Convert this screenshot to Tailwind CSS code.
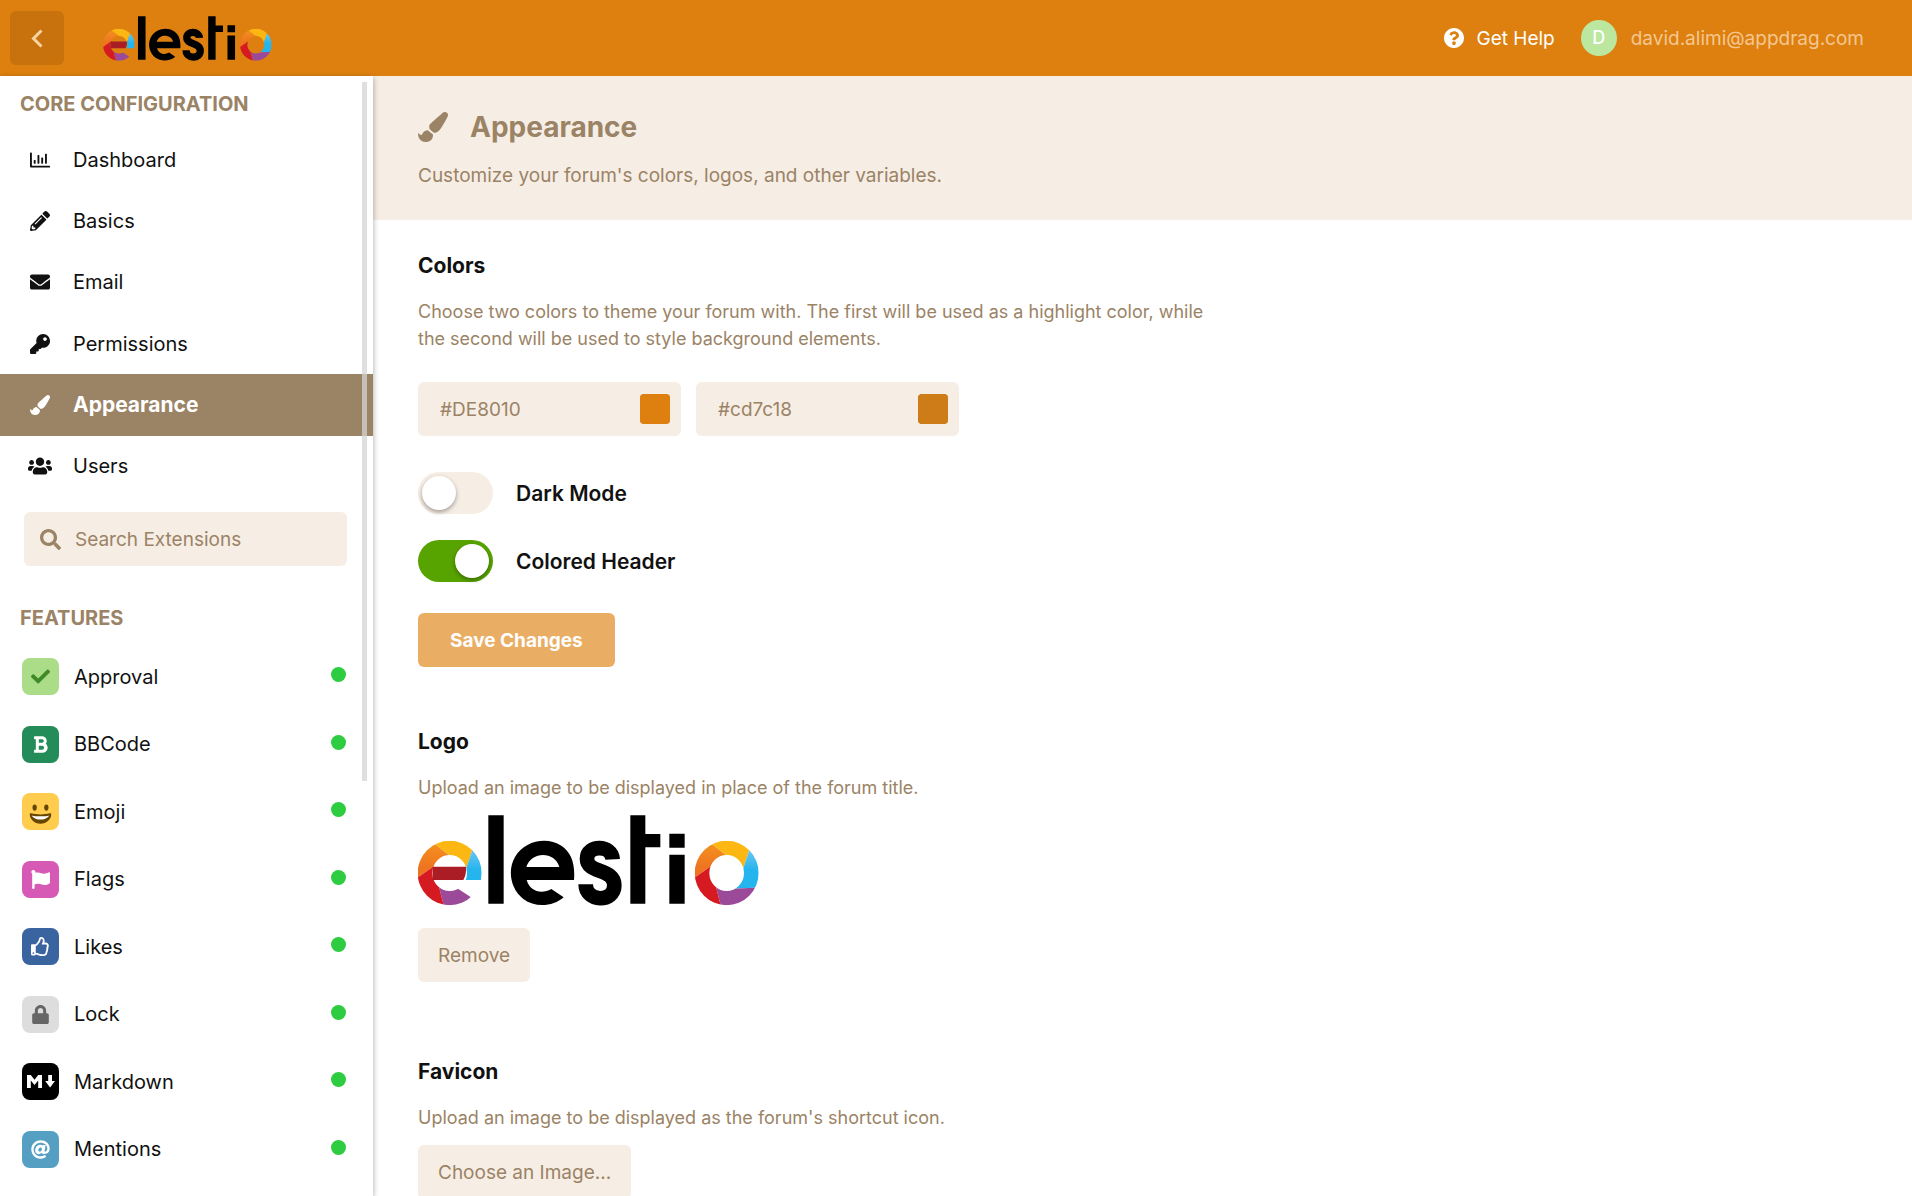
<!DOCTYPE html>
<html lang="en">
<head>
<meta charset="utf-8">
<meta name="viewport" content="width=device-width, initial-scale=1">
<title>Appearance</title>
<script src="https://cdn.jsdelivr.net/npm/@tailwindcss/browser@4"></script>
</head>
<body class="flex h-screen flex-col overflow-hidden bg-white font-['Inter',sans-serif] text-[#111]">

<!-- Shared logo drawing -->
<svg class="absolute size-0" aria-hidden="true">
  <defs>
    <linearGradient id="amber" x1="0" y1="1" x2="0" y2="0"><stop offset="0.3" stop-color="#ee7420"/><stop offset="0.8" stop-color="#f4901e"/></linearGradient>
    <linearGradient id="sky" x1="0" y1="0" x2="0" y2="1"><stop offset="0.25" stop-color="#5cc3f2"/><stop offset="0.6" stop-color="#24b4ee"/></linearGradient>
    <clipPath id="annulus"><path clip-rule="evenodd" d="M-96 0A96 97 0 1 1 96 0A96 97 0 1 1 -96 0ZM-52 0A52 54 0 1 0 52 0A52 54 0 1 0 -52 0Z"/></clipPath>
    <clipPath id="mouth"><path d="M-100 -100H100V21H0V30L25 47L64 73L63 110H-100Z"/></clipPath>
    <g id="ring" clip-path="url(#annulus)">
      <path fill="url(#amber)" d="M-110 23L-30 -32L8 -46L-60 -100L-120 -110Z"/>
      <path fill="#fdb713" d="M-60 -100L8 -46L47 -6L75 -90L60 -120Z"/>
      <path fill="url(#sky)" d="M75 -90L47 -6L20 47L120 42V-90Z"/>
      <path fill="#9b4a9a" d="M120 42L20 47L-34 34L-12 120H120Z"/>
      <path fill="#d51b21" d="M-12 120L-34 34L-30 -32L-110 23L-120 120Z"/>
    </g>
    <symbol id="elestio" viewBox="54 285 1023 273">
      <g transform="translate(149 459)"><g clip-path="url(#mouth)"><use href="#ring"/></g></g>
      <path fill="#aa1d24" d="M98 440H198Q200 462 190 480H98Z"/>
      <path d="M265 286h46v265h-46zM691 286h45v56h45v40h-45v169h-45zM808 341h46v42h-46zM808 404h46v147h-46z"/>
      <path fill-rule="evenodd" d="M522 480H380C390 515 425 524 454 507L491 532C460 560 405 564 370 537C331 507 322 450 345 411C373 362 440 348 484 377C513 396 526 430 522 480ZM379 441H478C466 394 394 392 379 441Z"/>
      <path fill="none" stroke="#000" stroke-width="44" d="M638 418C636 374 561 373 561 416C561 462 643 443 643 496C643 549 557 547 557 493"/>
      <use href="#ring" transform="translate(980 459)"/>
    </symbol>
  </defs>
</svg>

<header class="flex h-19 shrink-0 items-center bg-[#dd8010] pr-12 pl-2.5">
  <button type="button" aria-label="Back" class="flex size-[54px] items-center justify-center rounded-md bg-[#c8720e]">
    <svg class="h-[19px] w-3" viewBox="0 0 12 19" fill="none" stroke="#fbd3a2" stroke-width="3"><path d="M10.500 1.500L2.500 9.500L10.500 17.500"/></svg>
  </button>
  <a href="#" aria-label="elestio" class="ml-[38px] block"><svg class="h-[45px] w-[171px]"><use href="#elestio"/></svg></a>
  <div class="ml-auto flex items-center text-[19px]">
    <a href="#" class="flex items-center gap-3 text-white">
      <svg class="size-5" viewBox="8 8 496 496" fill="currentColor"><path d="M504 256c0 136.997-111.043 248-248 248S8 392.997 8 256C8 119.083 119.043 8 256 8s248 111.083 248 248zM262.655 90c-54.497 0-89.255 22.957-116.549 63.758-3.536 5.286-2.353 12.415 2.715 16.258l34.699 26.310c5.205 3.947 12.621 3.008 16.665-2.122 17.864-22.658 30.113-35.797 57.303-35.797 20.429 0 45.698 13.148 45.698 32.958 0 14.976-12.363 22.667-32.534 33.976C247.128 238.528 216 254.941 216 296v4c0 6.627 5.373 12 12 12h56c6.627 0 12-5.373 12-12v-1.333c0-28.462 83.186-29.647 83.186-106.667 0-58.002-60.165-102-116.531-102zM256 338c-25.365 0-46 20.635-46 46 0 25.364 20.635 46 46 46s46-20.636 46-46c0-25.364-20.635-46-46-46z"/></svg>
      <span class="pt-0.5">Get Help</span>
    </a>
    <button type="button" class="ml-[26px] flex items-center gap-3.5 text-[#f5c78f]">
      <span class="flex size-9 items-center justify-center rounded-full bg-[#bce79f] text-lg font-medium text-white">D</span>
      <span class="pt-0.5">david.alimi@appdrag.com</span>
    </button>
  </div>
</header>

<div class="flex min-h-0 flex-1">
  <aside class="relative z-10 w-[373px] shrink-0 overflow-hidden bg-white pt-3.5 shadow-[0_2px_6px_rgba(0,0,0,0.35)]">
    <h2 class="mb-[11px] pl-5 text-xl/7 font-bold text-[#9b8366]">CORE CONFIGURATION</h2>
    <nav class="grid h-[368px] grid-rows-6 text-xl">
      <a href="#" class="flex items-center gap-[21px] pl-7"><span class="flex w-6 justify-center"><svg class="size-5" viewBox="0 0 512 512" fill="currentColor"><path d="M396.800 352h22.400c6.400 0 12.800-6.400 12.800-12.800V108.800c0-6.400-6.400-12.800-12.800-12.800h-22.400c-6.400 0-12.800 6.400-12.800 12.800v230.400c0 6.400 6.400 12.800 12.800 12.800zm-192 0h22.400c6.400 0 12.800-6.400 12.800-12.800V140.800c0-6.400-6.400-12.800-12.800-12.800h-22.400c-6.400 0-12.800 6.400-12.800 12.800v198.400c0 6.400 6.400 12.800 12.800 12.800zm96 0h22.400c6.400 0 12.800-6.400 12.800-12.800V204.800c0-6.400-6.400-12.800-12.800-12.800h-22.400c-6.400 0-12.800 6.400-12.800 12.800v134.400c0 6.400 6.400 12.800 12.800 12.800zM496 400H48V80c0-8.840-7.160-16-16-16H16C7.160 64 0 71.160 0 80v336c0 17.670 14.330 32 32 32h464c8.840 0 16-7.160 16-16v-16c0-8.840-7.160-16-16-16zm-387.200-48h22.400c6.400 0 12.800-6.400 12.800-12.800v-70.400c0-6.400-6.400-12.800-12.800-12.800h-22.400c-6.400 0-12.800 6.400-12.800 12.800v70.400c0 6.400 6.400 12.800 12.800 12.800z"/></svg></span>Dashboard</a>
      <a href="#" class="flex items-center gap-[21px] pl-7"><span class="flex w-6 justify-center"><svg class="size-5" viewBox="0 0 512 512" fill="currentColor"><path d="M497.900 142.100l-46.100 46.100c-4.700 4.700-12.300 4.700-17 0l-111-111c-4.700-4.700-4.700-12.300 0-17l46.100-46.100c18.700-18.700 49.100-18.700 67.900 0l60.100 60.100c18.800 18.700 18.800 49.100 0 67.900zM284.200 99.800L21.600 362.400.4 483.900c-2.900 16.400 11.400 30.600 27.800 27.800l121.500-21.300 262.600-262.600c4.700-4.700 4.700-12.300 0-17l-111-111c-4.800-4.700-12.400-4.700-17.100 0zM124.100 339.900c-5.500-5.500-5.500-14.300 0-19.800l154-154c5.500-5.500 14.300-5.500 19.800 0s5.500 14.300 0 19.800l-154 154c-5.500 5.500-14.300 5.500-19.800 0zM88 424h48v36.300l-64.500 11.300-31.100-31.100L51.700 376H88v48z"/></svg></span>Basics</a>
      <a href="#" class="flex items-center gap-[21px] pl-7"><span class="flex w-6 justify-center"><svg class="size-5" viewBox="0 0 512 512" fill="currentColor"><path d="M502.300 190.800c3.900-3.100 9.700-.2 9.700 4.700V400c0 26.500-21.500 48-48 48H48c-26.500 0-48-21.500-48-48V195.600c0-5 5.700-7.800 9.700-4.700 22.400 17.400 52.100 39.500 154.100 113.600 21.100 15.400 56.700 47.800 92.200 47.600 35.700.3 72-32.800 92.300-47.600 102-74.100 131.600-96.300 154-113.700zM256 320c23.200.4 56.600-29.200 73.400-41.400 132.700-96.300 142.800-104.700 173.400-128.700 5.800-4.500 9.200-11.500 9.200-18.900v-19c0-26.500-21.500-48-48-48H48c-26.500 0-48 21.500-48 48v19c0 7.400 3.400 14.300 9.200 18.900 30.600 23.900 40.700 32.400 173.400 128.700 16.800 12.200 50.200 41.800 73.400 41.400z"/></svg></span>Email</a>
      <a href="#" class="flex items-center gap-[21px] pl-7"><span class="flex w-6 justify-center"><svg class="size-5" viewBox="0 0 512 512" fill="currentColor"><path d="M512 176.001C512 273.203 433.202 352 336 352c-11.220 0-22.190-1.062-32.827-3.069l-24.012 27.014A23.999 23.999 0 0 1 261.223 384H224v40c0 13.255-10.745 24-24 24h-40v40c0 13.255-10.745 24-24 24H24c-13.255 0-24-10.745-24-24v-78.059c0-6.365 2.529-12.470 7.029-16.971l161.802-161.802C163.108 213.814 160 195.271 160 176 160 78.798 238.797.001 335.999 0 433.488-.001 512 78.511 512 176.001zM336 128c0 26.510 21.490 48 48 48s48-21.490 48-48-21.490-48-48-48-48 21.490-48 48z"/></svg></span>Permissions</a>
      <a href="#" aria-current="page" class="flex items-center gap-[21px] bg-[#9b8366] pl-7 text-[21px] font-bold text-white"><span class="flex w-6 justify-center"><svg class="size-5" viewBox="0 0 512 512" fill="currentColor"><path id="brush" d="M167.020 309.340c-40.120 2.580-76.530 17.860-97.190 72.300-2.350 6.210-8 9.980-14.590 9.980-11.110 0-45.460-27.670-55.250-34.350C0 439.620 37.930 512 128 512c75.860 0 128-43.770 128-120.190 0-3.110-.65-6.080-.97-9.130l-88.010-73.340zM457.890 0c-15.160 0-29.370 6.710-40.210 16.450C213.270 199.050 192 203.340 192 257.090c0 13.700 3.250 26.760 8.730 38.700l63.820 53.180c7.210 1.800 14.640 3.030 22.390 3.030 62.110 0 98.110-45.470 211.160-256.460 7.380-14.350 13.900-29.850 13.900-45.990C512 20.640 486 0 457.890 0z"/></svg></span>Appearance</a>
      <a href="#" class="flex items-center gap-[21px] pl-7"><span class="flex w-6 justify-center"><svg class="h-5 w-6" viewBox="0 0 640 512" fill="currentColor"><path d="M96 224c35.300 0 64-28.700 64-64s-28.700-64-64-64-64 28.700-64 64 28.700 64 64 64zm448 0c35.300 0 64-28.700 64-64s-28.700-64-64-64-64 28.700-64 64 28.700 64 64 64zm32 32h-64c-17.600 0-33.500 7.100-45.100 18.600 40.300 22.100 68.900 62 75.100 109.400h66c17.700 0 32-14.300 32-32v-32c0-35.300-28.700-64-64-64zm-256 0c61.900 0 112-50.100 112-112S381.900 32 320 32 208 82.100 208 144s50.100 112 112 112zm76.800 32h-8.300c-20.800 10-43.900 16-68.500 16s-47.600-6-68.500-16h-8.300C179.600 288 128 339.600 128 403.200V432c0 26.500 21.500 48 48 48h288c26.500 0 48-21.500 48-48v-28.800c0-63.600-51.600-115.200-115.200-115.200zm-223.700-13.400C161.500 263.100 145.600 256 128 256H64c-35.300 0-64 28.700-64 64v32c0 17.700 14.300 32 32 32h65.900c6.300-47.400 34.900-87.300 75.200-109.400z"/></svg></span>Users</a>
    </nav>

    <label class="mt-[15px] mr-[26px] ml-6 flex h-[54px] items-center gap-3.5 rounded-md bg-[#f6ede4] px-4 text-[#9b8366]">
      <svg class="size-[21px] shrink-0" viewBox="0 0 512 512" fill="currentColor"><path d="M505 442.700L405.300 343c-4.500-4.500-10.600-7-17-7H372c27.600-35.300 44-79.700 44-128C416 93.100 322.900 0 208 0S0 93.100 0 208s93.100 208 208 208c48.300 0 92.700-16.400 128-44v16.300c0 6.400 2.500 12.500 7 17l99.700 99.700c9.400 9.400 24.600 9.400 33.900 0l28.300-28.300c9.400-9.400 9.400-24.600.1-34zM208 336c-70.700 0-128-57.200-128-128 0-70.700 57.200-128 128-128 70.700 0 128 57.200 128 128 0 70.700-57.200 128-128 128z"/></svg>
      <input type="search" aria-label="Search Extensions" placeholder="Search Extensions" class="w-full min-w-0 bg-transparent pt-0.5 text-[19px] outline-none placeholder:text-[#9b8366]">
    </label>

    <h2 class="mt-[38px] mb-[11px] pl-5 text-xl/7 font-bold text-[#9b8366]">FEATURES</h2>
    <nav class="grid h-[540px] grid-rows-8 pr-[27px] pl-[22px] text-xl">
      <a href="#" class="flex items-center gap-[15px]"><span class="flex size-[37px] items-center justify-center rounded-lg bg-[#abdc88] text-[#3f8a26]"><svg class="size-[19px]" viewBox="0 0 512 512" fill="currentColor"><path d="M173.898 439.404l-166.400-166.400c-9.997-9.997-9.997-26.206 0-36.204l36.203-36.204c9.997-9.998 26.207-9.998 36.204 0L192 312.690 432.095 72.596c9.997-9.997 26.207-9.997 36.204 0l36.203 36.204c9.997 9.997 9.997 26.206 0 36.204l-294.400 294.401c-9.998 9.997-26.207 9.997-36.204-.001z"/></svg></span>Approval<span class="mb-1 ml-auto size-[15px] rounded-full bg-[#2ecc40]"></span></a>
      <a href="#" class="flex items-center gap-[15px]"><span class="flex size-[37px] items-center justify-center rounded-lg bg-[#238c59] text-white"><svg class="size-[19px]" viewBox="0 0 384 512" fill="currentColor"><path d="M333.490 238a122 122 0 0 0 27-65.210C367.870 96.490 308 32 233.420 32H34a16 16 0 0 0-16 16v48a16 16 0 0 0 16 16h31.870v288H34a16 16 0 0 0-16 16v48a16 16 0 0 0 16 16h209.320c70.800 0 134.140-51.750 141-122.400 4.740-48.450-16.390-92.060-50.830-119.600zM145.660 112h87.760a48 48 0 0 1 0 96h-87.760zm87.760 288h-87.760V288h87.760a56 56 0 0 1 0 112z"/></svg></span>BBCode<span class="mb-1 ml-auto size-[15px] rounded-full bg-[#2ecc40]"></span></a>
      <a href="#" class="flex items-center gap-[15px]"><span class="flex size-[37px] items-center justify-center rounded-lg bg-[#ffcc4d]"><svg class="size-[37px]" viewBox="0 0 38 38"><ellipse cx="13" cy="15" rx="2.200" ry="3.200" fill="#664500"/><ellipse cx="25" cy="15" rx="2.200" ry="3.200" fill="#664500"/><path fill="#664500" d="M19 22c-4 0-6.600-.5-9.800-1.100-.7-.1-1.200.4-1.200 1.300 0 4.400 4.500 9.500 11 9.500s11-5.100 11-9.500c0-.9-.5-1.400-1.200-1.300-3.200.6-5.800 1.100-9.800 1.100z"/><path fill="#fff" d="M10 23s3 1 9 1 9-1 9-1-2 4.200-9 4.200-9-4.200-9-4.200z"/></svg></span>Emoji<span class="mb-1 ml-auto size-[15px] rounded-full bg-[#2ecc40]"></span></a>
      <a href="#" class="flex items-center gap-[15px]"><span class="flex size-[37px] items-center justify-center rounded-lg bg-[#d659b5] text-white"><svg class="size-[19px]" viewBox="0 0 512 512" fill="currentColor"><path d="M349.565 98.783C295.978 98.783 251.721 64 184.348 64c-24.955 0-47.309 4.384-68.045 12.013a55.947 55.947 0 0 0 3.586-23.562C118.117 24.015 94.806 1.206 66.338.048 34.345-1.254 8 24.296 8 56c0 19.026 9.497 35.825 24 45.945V488c0 13.255 10.745 24 24 24h16c13.255 0 24-10.745 24-24v-94.400c28.311-12.064 63.582-22.122 114.435-22.122 53.588 0 97.844 34.783 165.217 34.783 48.169 0 86.667-16.294 122.505-40.858C506.840 359.452 512 349.571 512 339.045v-243.100c0-23.393-24.269-38.870-45.485-29.016-34.338 15.948-76.454 31.854-116.950 31.854z"/></svg></span>Flags<span class="mb-1 ml-auto size-[15px] rounded-full bg-[#2ecc40]"></span></a>
      <a href="#" class="flex items-center gap-[15px]"><span class="flex size-[37px] items-center justify-center rounded-lg bg-[#3a64a0] text-white"><svg class="size-[19px]" viewBox="0 0 512 512" fill="currentColor"><path d="M466.270 286.690C475.040 271.840 480 256 480 236.850c0-44.015-37.218-85.580-85.820-85.580H357.700c4.920-12.810 8.850-28.130 8.850-46.540C366.550 31.936 328.860 0 271.280 0c-61.607 0-58.093 94.933-71.760 108.600-22.747 22.747-49.615 66.447-68.760 83.400H32c-17.673 0-32 14.327-32 32v240c0 17.673 14.327 32 32 32h64c14.893 0 27.408-10.174 30.978-23.950 44.509 1.001 75.060 39.940 177.802 39.940 7.220 0 15.220.01 22.220.01 77.117 0 111.986-39.423 112.940-95.330 13.319-18.425 20.299-43.122 17.340-66.990 9.854-18.452 13.664-40.343 8.990-62.990zm-61.750 53.830c12.560 21.130 1.260 49.410-13.940 57.570 7.700 48.780-17.608 65.900-53.120 65.900h-37.820c-71.639 0-118.029-37.820-171.640-37.820V240h10.920c28.360 0 67.980-70.890 94.540-97.460 28.360-28.360 18.910-75.630 37.820-94.540 47.270 0 47.270 32.980 47.270 56.730 0 39.170-28.360 56.720-28.360 94.540h103.990c21.110 0 37.730 18.910 37.820 37.820.09 18.900-12.820 37.810-22.270 37.810 13.489 14.555 16.371 45.236-5.210 65.620zM88 432c0 13.255-10.745 24-24 24s-24-10.745-24-24 10.745-24 24-24 24 10.745 24 24z"/></svg></span>Likes<span class="mb-1 ml-auto size-[15px] rounded-full bg-[#2ecc40]"></span></a>
      <a href="#" class="flex items-center gap-[15px]"><span class="flex size-[37px] items-center justify-center rounded-lg bg-[#ddd] text-[#666]"><svg class="size-[19px]" viewBox="0 0 448 512" fill="currentColor"><path d="M400 224h-24v-72C376 68.200 307.800 0 224 0S72 68.200 72 152v72H48c-26.500 0-48 21.500-48 48v192c0 26.500 21.500 48 48 48h352c26.500 0 48-21.500 48-48V272c0-26.500-21.500-48-48-48zm-104 0H152v-72c0-39.700 32.300-72 72-72s72 32.300 72 72v72z"/></svg></span>Lock<span class="mb-1 ml-auto size-[15px] rounded-full bg-[#2ecc40]"></span></a>
      <a href="#" class="flex items-center gap-[15px]"><span class="flex size-[37px] items-center justify-center rounded-lg bg-black text-white"><svg class="h-[13px] w-7" viewBox="0 0 28 13" fill="currentColor"><path d="M0 13V0H3.800L7.500 4.700L11.200 0H15V13H11.200V5.500L7.500 10L3.800 5.500V13ZM21.200 0H25V6H28L23.100 12.500L18.200 6H21.200Z"/></svg></span>Markdown<span class="mb-1 ml-auto size-[15px] rounded-full bg-[#2ecc40]"></span></a>
      <a href="#" class="flex items-center gap-[15px]"><span class="flex size-[37px] items-center justify-center rounded-lg bg-[#559fc2] text-white"><svg class="size-[19px]" viewBox="0 0 512 512" fill="currentColor"><path d="M256 8C118.941 8 8 118.919 8 256c0 137.059 110.919 248 248 248 48.154 0 95.342-14.140 135.408-40.223 12.005-7.815 14.625-24.288 5.552-35.372l-10.177-12.433c-7.671-9.371-21.179-11.667-31.373-5.129C325.920 429.757 291.314 440 256 440c-101.458 0-184-82.542-184-184S154.542 72 256 72c100.139 0 184 57.619 184 160 0 38.786-21.093 79.742-58.170 83.693-17.349-.454-16.910-12.857-13.476-30.024l23.433-121.110C394.653 149.750 383.308 136 368.225 136h-44.981a13.518 13.518 0 0 0-13.432 11.993l-.01.092c-14.697-17.901-40.448-21.775-59.971-21.775-74.580 0-137.831 62.234-137.831 151.460 0 65.303 36.785 105.870 96 105.870 26.984 0 57.369-15.637 74.991-38.333 9.522 34.104 40.613 34.104 70.710 34.104C462.609 379.410 504 307.798 504 232 504 95.653 394.023 8 256 8zm-21.680 304.430c-22.249 0-36.070-15.623-36.070-40.771 0-44.993 30.779-72.729 58.630-72.729 22.292 0 35.601 15.241 35.601 40.770 0 45.061-33.875 72.730-58.161 72.730z"/></svg></span>Mentions<span class="mb-1 ml-auto size-[15px] rounded-full bg-[#2ecc40]"></span></a>
    </nav>
    <!-- scroll thumb over the list -->
    <div class="absolute top-1.5 right-1.5 h-[699px] w-[5px] bg-[#d4d4d4]/75"></div>
  </aside>

  <main class="min-w-0 flex-1 overflow-hidden">
    <div class="bg-[#f6ede4] px-[45px] pt-[33px] pb-[30px] text-[#9b8366]">
      <h1 class="flex items-center gap-[22px] text-[28px]/9 font-bold"><svg class="size-[30px]" viewBox="0 0 512 512" fill="currentColor"><use href="#brush"/></svg>Appearance</h1>
      <p class="mt-[17px] text-[19px]/7">Customize your forum's colors, logos, and other variables.</p>
    </div>

    <div class="px-[45px] pt-8">
      <form class="max-w-[800px]">
        <h2 class="text-[21px]/7 font-bold">Colors</h2>
        <p class="mt-[18px] text-lg/[27px] text-[#9b8366]">Choose two colors to theme your forum with. The first will be used as a highlight color, while the second will be used to style background elements.</p>
        <div class="mt-[30px] flex gap-[15px] text-[19px] text-[#9b8366]">
          <div class="flex h-[54px] w-[263px] items-center rounded-md bg-[#f6ede4] pr-[11px] pl-[22px]">
            <input type="text" aria-label="Primary color" value="#DE8010" class="min-w-0 flex-1 bg-transparent pt-0.5 outline-none">
            <input type="color" aria-label="Pick primary color" value="#de8010" class="size-[30px] appearance-none rounded-sm border-0 bg-[#de8010] p-0 [&::-webkit-color-swatch]:rounded-sm [&::-webkit-color-swatch]:border-0 [&::-webkit-color-swatch-wrapper]:p-0">
          </div>
          <div class="flex h-[54px] w-[263px] items-center rounded-md bg-[#f6ede4] pr-[11px] pl-[22px]">
            <input type="text" aria-label="Secondary color" value="#cd7c18" class="min-w-0 flex-1 bg-transparent pt-0.5 outline-none">
            <input type="color" aria-label="Pick secondary color" value="#cd7c18" class="size-[30px] appearance-none rounded-sm border-0 bg-[#cd7c18] p-0 [&::-webkit-color-swatch]:rounded-sm [&::-webkit-color-swatch]:border-0 [&::-webkit-color-swatch-wrapper]:p-0">
          </div>
        </div>
        <label class="mt-9 flex w-fit items-center gap-[23px] text-[21px]/7 font-semibold">
          <input type="checkbox" role="switch" class="flex h-[42px] w-[75px] appearance-none items-center rounded-full bg-[#f6ede4] px-1 before:size-[34px] before:rounded-full before:bg-white before:shadow-[0_2px_4px_rgba(0,0,0,0.35)] checked:justify-end checked:bg-[#57a300]">
          <span class="pt-0.5">Dark Mode</span>
        </label>
        <label class="mt-[26px] flex w-fit items-center gap-[23px] text-[21px]/7 font-semibold">
          <input type="checkbox" role="switch" checked class="flex h-[42px] w-[75px] appearance-none items-center rounded-full bg-[#f6ede4] px-1 before:size-[34px] before:rounded-full before:bg-white before:shadow-[0_2px_4px_rgba(0,0,0,0.35)] checked:justify-end checked:bg-[#57a300]">
          <span class="pt-0.5">Colored Header</span>
        </label>
        <button type="submit" class="mt-[31px] block h-[54px] rounded-md bg-[#e9ad64] px-8 pt-0.5 text-[19px] font-bold text-white">Save Changes</button>
      </form>

      <section class="mt-[61px]">
        <h2 class="text-[21px]/7 font-bold">Logo</h2>
        <p class="mt-[18px] text-lg/[27px] text-[#9b8366]">Upload an image to be displayed in place of the forum title.</p>
        <svg class="mt-3.5 h-[91px] w-[341px]" role="img" aria-label="elestio"><use href="#elestio"/></svg>
        <button type="button" class="mt-[22px] block h-[54px] rounded-md bg-[#f6ede4] px-5 pt-0.5 text-[19px] text-[#9b8366]">Remove</button>
      </section>

      <section class="mt-[76px]">
        <h2 class="text-[21px]/7 font-bold">Favicon</h2>
        <p class="mt-[18px] text-lg/[27px] text-[#9b8366]">Upload an image to be displayed as the forum's shortcut icon.</p>
        <button type="button" class="mt-3.5 block h-[54px] rounded-md bg-[#f6ede4] px-5 pt-0.5 text-[19px] text-[#9b8366]">Choose an Image...</button>
      </section>
    </div>
  </main>
</div>
</body>
</html>
